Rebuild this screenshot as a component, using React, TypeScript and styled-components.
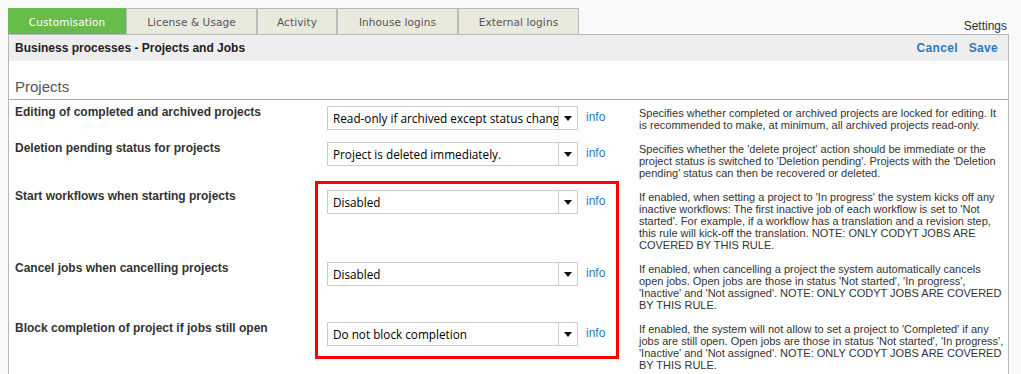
import styled, { createGlobalStyle } from 'styled-components';

const GlobalStyle = createGlobalStyle`
  body {
    margin: 0;
    background: #f9f9f9;
    font-family: "Liberation Sans", Arial, sans-serif;
    color: #333;
  }
`;

interface Rule {
  readonly label: string;
  readonly value: string;
  readonly description: string;
}

const tabs = [
  { title: 'Customisation', width: 118 },
  { title: 'License & Usage', width: 131 },
  { title: 'Activity', width: 80 },
  { title: 'Inhouse logins', width: 121 },
  { title: 'External logins', width: 121 },
];

const rules: Rule[] = [
  {
    label: 'Editing of completed and archived projects',
    value: 'Read-only if archived except status change',
    description:
      'Specifies whether completed or archived projects are locked for editing. It is recommended to make, at minimum, all archived projects read-only.',
  },
  {
    label: 'Deletion pending status for projects',
    value: 'Project is deleted immediately.',
    description:
      "Specifies whether the 'delete project' action should be immediate or the project status is switched to 'Deletion pending'. Projects with the 'Deletion pending' status can then be recovered or deleted.",
  },
  {
    label: 'Start workflows when starting projects',
    value: 'Disabled',
    description:
      "If enabled, when setting a project to 'In progress' the system kicks off any inactive workflows: The first inactive job of each workflow is set to 'Not started'. For example, if a workflow has a translation and a revision step, this rule will kick-off the translation. NOTE: ONLY CODYT JOBS ARE COVERED BY THIS RULE.",
  },
  {
    label: 'Cancel jobs when cancelling projects',
    value: 'Disabled',
    description:
      "If enabled, when cancelling a project the system automatically cancels open jobs. Open jobs are those in status 'Not started', 'In progress', 'Inactive' and 'Not assigned'. NOTE: ONLY CODYT JOBS ARE COVERED BY THIS RULE.",
  },
  {
    label: 'Block completion of project if jobs still open',
    value: 'Do not block completion',
    description:
      "If enabled, the system will not allow to set a project to 'Completed' if any jobs are still open. Open jobs are those in status 'Not started', 'In progress', 'Inactive' and 'Not assigned'. NOTE: ONLY CODYT JOBS ARE COVERED BY THIS RULE.",
  },
];

export default function App() {
  return (
    <Page>
      <GlobalStyle />
      <TabBar>
        <Tabs>
          {tabs.map((tab, i) => (
            <Tab key={tab.title} $active={i === 0} $width={tab.width}>
              {tab.title}
            </Tab>
          ))}
        </Tabs>
        <Settings>Settings</Settings>
      </TabBar>
      <Panel>
        <PanelHeader>
          <PanelTitle>Business processes - Projects and Jobs</PanelTitle>
          <Actions>
            <ActionLink>Cancel</ActionLink>
            <ActionLink>Save</ActionLink>
          </Actions>
        </PanelHeader>
        <SectionTitle>Projects</SectionTitle>
        <Rules>
          {rules.map((rule) => (
            <RuleRow key={rule.label}>
              <Label>{rule.label}</Label>
              <SelectBox>
                <SelectValue>{rule.value}</SelectValue>
                <SelectArrow>
                  <svg width="8" height="5" viewBox="0 0 8 5">
                    <path d="M0 0h8L4 5z" fill="#111" />
                  </svg>
                </SelectArrow>
              </SelectBox>
              <Info>info</Info>
              <Description>{rule.description}</Description>
            </RuleRow>
          ))}
          <Highlight />
        </Rules>
      </Panel>
    </Page>
  );
}

const Page = styled.div`
  padding: 8px 0 0 8px;
  width: 1001px;
`;

const TabBar = styled.div`
  display: flex;
  justify-content: space-between;
  align-items: flex-end;
`;

const Tabs = styled.div`
  display: flex;
`;

const Tab = styled.div<{ $active?: boolean; $width: number }>`
  box-sizing: border-box;
  width: ${(p) => p.$width}px;
  height: 26px;
  display: flex;
  align-items: center;
  justify-content: center;
  font-family: "DejaVu Sans", Verdana, sans-serif;
  font-size: 10.5px;
  letter-spacing: 0.1px;
  color: ${(p) => (p.$active ? '#fff' : '#555')};
  background: ${(p) => (p.$active ? '#68bc49' : '#e9e9dd')};
  border: 1px solid ${(p) => (p.$active ? '#68bc49' : '#bbb')};
  border-bottom: none;
`;

const Settings = styled.div`
  font-size: 12px;
  color: #333;
  padding: 0 2px 1px 0;
`;

const Panel = styled.div`
  background: #fff;
  border: 1px solid #b8b8b8;
  border-bottom: none;
  height: 340px;
`;

const PanelHeader = styled.div`
  height: 26px;
  background: #eee;
  display: flex;
  align-items: center;
  justify-content: space-between;
  padding: 0 10px 0 6px;
`;

const PanelTitle = styled.div`
  font-size: 12px;
  font-weight: bold;
  color: #222;
`;

const Actions = styled.div`
  display: flex;
  gap: 11px;
`;

const ActionLink = styled.a`
  font-size: 12px;
  font-weight: bold;
  color: #2a7bbd;
  letter-spacing: 0.3px;
  cursor: pointer;
`;

const SectionTitle = styled.div`
  font-size: 15px;
  color: #555;
  padding: 17px 6px 4px;
  line-height: 17px;
  border-bottom: 1px solid #aaa;
`;

const Rules = styled.div`
  position: relative;
  padding: 6px 0 0 6px;
  display: flex;
  flex-direction: column;
  gap: 11px;
`;

const RuleRow = styled.div`
  display: grid;
  grid-template-columns: 312px 251px 61px 365px;
  align-items: start;
`;

const Label = styled.div`
  font-size: 12px;
  font-weight: bold;
  line-height: 13px;
  color: #333;
`;

const SelectBox = styled.div`
  height: 24px;
  box-sizing: border-box;
  border: 1px solid #ccc;
  background: #fff;
  display: flex;
`;

const SelectValue = styled.div`
  flex: 1;
  min-width: 0;
  overflow: hidden;
  white-space: nowrap;
  padding: 0 5px;
  font-family: "Open Sans", sans-serif;
  font-size: 11.75px;
  line-height: 22px;
  color: #000;
`;

const SelectArrow = styled.div`
  width: 18px;
  border-left: 1px solid #ccc;
  display: flex;
  align-items: center;
  justify-content: center;
`;

const Info = styled.a`
  font-size: 12px;
  color: #2a7bbd;
  padding: 4px 0 0 8px;
  line-height: 14px;
`;

const Description = styled.div`
  font-size: 11px;
  line-height: 12px;
  padding-top: 1px;
  color: #333;
`;

const Highlight = styled.div`
  position: absolute;
  left: 306px;
  top: 81px;
  width: 304px;
  height: 178px;
  box-sizing: border-box;
  border: 3px solid #f00;
  pointer-events: none;
`;
